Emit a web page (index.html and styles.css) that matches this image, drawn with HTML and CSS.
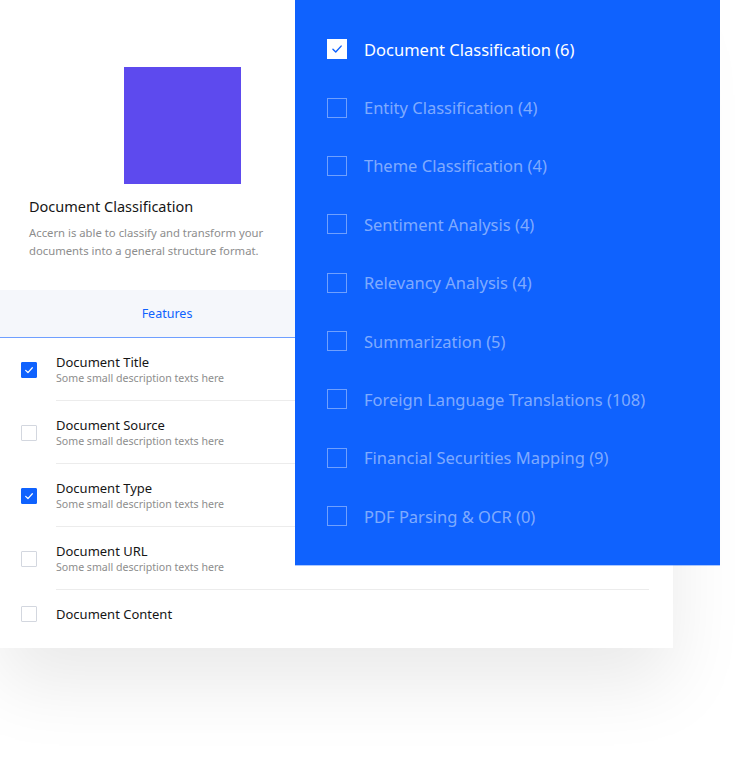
FILE: index.html
```html
<!DOCTYPE html>
<html>
<head>
<meta charset="utf-8">
<link rel="stylesheet" href="styles.css">
</head>
<body>
<div class="stage">
  <div class="card">
    <div class="hero">
      <div class="thumb"></div>
      <h2 class="hero-title">Document Classification</h2>
      <p class="hero-desc">Accern is able to classify and transform your documents into a general structure format.</p>
    </div>
    <div class="tabs">
      <div class="tab active">Features</div>
    </div>
    <ul class="features">
      <li class="feature">
        <span class="cb checked"><svg viewBox="0 0 16 16"><polyline points="4.2,8.4 6.8,10.9 11.8,5.4"/></svg></span>
        <div class="feature-text"><div class="f-title">Document Title</div><div class="f-desc">Some small description texts here</div></div>
      </li>
      <li class="feature">
        <span class="cb"></span>
        <div class="feature-text"><div class="f-title">Document Source</div><div class="f-desc">Some small description texts here</div></div>
      </li>
      <li class="feature">
        <span class="cb checked"><svg viewBox="0 0 16 16"><polyline points="4.2,8.4 6.8,10.9 11.8,5.4"/></svg></span>
        <div class="feature-text"><div class="f-title">Document Type</div><div class="f-desc">Some small description texts here</div></div>
      </li>
      <li class="feature">
        <span class="cb"></span>
        <div class="feature-text"><div class="f-title">Document URL</div><div class="f-desc">Some small description texts here</div></div>
      </li>
      <li class="feature last">
        <span class="cb"></span>
        <div class="feature-text"><div class="f-title">Document Content</div></div>
      </li>
    </ul>
  </div>

  <div class="panel">
    <ul class="cats">
      <li class="cat on"><span class="pcb"><svg viewBox="0 0 20 20"><polyline points="5.5,10.3 8.6,13.3 14.6,6.8"/></svg></span>Document Classification (6)</li>
      <li class="cat"><span class="pcb"></span>Entity Classification (4)</li>
      <li class="cat"><span class="pcb"></span>Theme Classification (4)</li>
      <li class="cat"><span class="pcb"></span>Sentiment Analysis (4)</li>
      <li class="cat"><span class="pcb"></span>Relevancy Analysis (4)</li>
      <li class="cat"><span class="pcb"></span>Summarization (5)</li>
      <li class="cat"><span class="pcb"></span>Foreign Language Translations (108)</li>
      <li class="cat"><span class="pcb"></span>Financial Securities Mapping (9)</li>
      <li class="cat"><span class="pcb"></span>PDF Parsing &amp; OCR (0)</li>
    </ul>
  </div>
</div>
</body>
</html>
```

FILE: styles.css
```css
* { box-sizing: border-box; }
html, body { margin: 0; padding: 0; background: #ffffff; }
body { font-family: "Noto Sans", "Open Sans", sans-serif; color: #161616; }

.stage { position: relative; width: 741px; height: 758px; overflow: hidden; }

.card {
  width: 673px;
  height: 648px;
  background: #ffffff;
  box-shadow: 0 36px 70px rgba(0, 0, 0, 0.085);
}

.hero { height: 290px; padding: 67px 0 0 29px; }
.thumb {
  width: 117px; height: 117px;
  margin-left: 95px;
  background: #5d4aee;
}
.hero-title {
  margin: 12px 0 0;
  font-size: 14.5px; font-weight: 400; line-height: 20px;
  color: #161616;
}
.hero-desc {
  margin: 8px 0 0;
  width: 250px;
  font-size: 11.3px; line-height: 18px;
  color: #8d8d8d;
}

.tabs { display: flex; height: 48px; }
.tab {
  width: 334px;
  display: flex; align-items: center; justify-content: center;
  background: #f5f7fb;
  font-size: 12.5px;
  color: #0f62fe;
  border-bottom: 1px solid #6f9fff;
}

.features { list-style: none; margin: 0; padding: 0; }
.feature { display: flex; align-items: stretch; padding-left: 21px; }
.cb {
  flex: none;
  align-self: center;
  width: 16px; height: 16px;
  border: 1px solid #d3d7df;
  border-radius: 1px;
  margin-right: 19px;
  display: flex;
}
.cb.checked { background: #0f62fe; border-color: #0f62fe; }
.cb svg { width: 100%; height: 100%; }
.cb polyline { fill: none; stroke: #ffffff; stroke-width: 1.4; stroke-linecap: round; stroke-linejoin: round; }

.feature-text {
  flex: none;
  width: 593px;
  padding: 15px 0;
  border-bottom: 1px solid #ececec;
}
.feature.last .feature-text { border-bottom: none; }
.f-title { font-size: 13px; line-height: 18px; color: #161616; }
.f-desc { font-size: 10.6px; line-height: 14px; color: #8d8d8d; }

.panel {
  position: absolute;
  left: 295px; top: 0;
  width: 425px; height: 565px;
  background: #0f62fe;
  box-shadow: 0 1px 0 rgba(15, 98, 254, 0.35);
}
.cats { list-style: none; margin: 0; padding: 20px 0 0 32px; }
.cat {
  height: 58.375px;
  display: flex; align-items: center;
  font-size: 16.5px;
  color: rgba(255, 255, 255, 0.48);
}
.cat.on { color: #ffffff; }
.pcb {
  flex: none;
  width: 20px; height: 20px;
  margin-right: 17px;
  border: 1px solid rgba(255, 255, 255, 0.4);
  display: flex;
}
.cat.on .pcb { background: #ffffff; border-color: #ffffff; }
.pcb svg { width: 100%; height: 100%; }
.pcb polyline { fill: none; stroke: #0f62fe; stroke-width: 1.6; stroke-linecap: round; stroke-linejoin: round; }
```
